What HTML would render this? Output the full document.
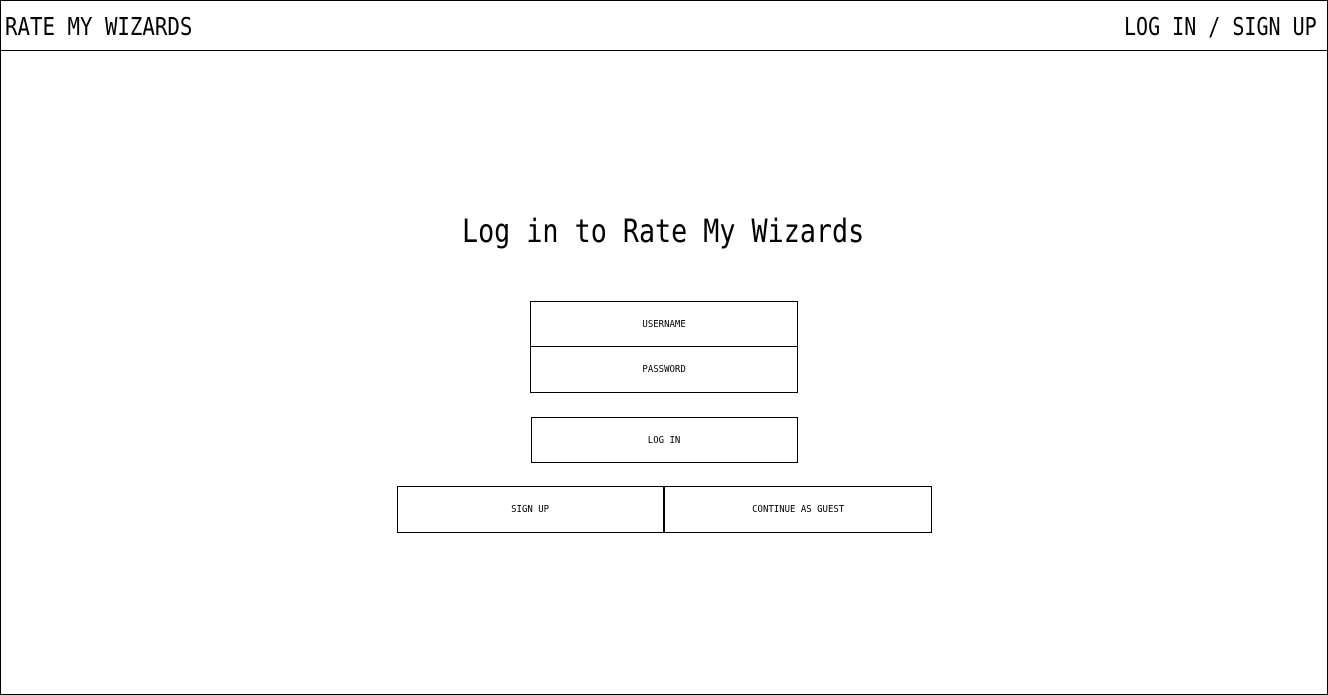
<!DOCTYPE html>
<html><head><style>
*{margin:0;padding:0;box-sizing:border-box}
html,body{width:1328px;height:695px;background:#fff;overflow:hidden}
body{position:relative;font-family:"DejaVu Sans Mono","Liberation Mono",monospace;color:#000}
.frame{position:absolute;left:0;top:0;width:1328px;height:695px;border:1px solid #000}
.hline{position:absolute;left:0;top:50px;width:1328px;height:1px;background:#000}
.t{position:absolute;white-space:nowrap;line-height:1;transform-origin:0 0;transform:scaleX(0.83);font-weight:300}
.box{position:absolute;border:1px solid #000;display:flex;align-items:center;justify-content:center;font-size:10px;background:#fff}
.box span{display:inline-block;transform:scaleX(0.9)}
</style></head><body>
<div class="frame"></div>
<div class="hline"></div>
<div class="t" style="left:5px;top:14px;font-size:25px">RATE MY WIZARDS</div>
<div class="t" style="left:1124px;top:14px;font-size:25px;transform:scaleX(0.8)">LOG IN / SIGN UP</div>
<div class="t" style="left:462px;top:215px;font-size:32px;transform:scaleX(0.835)">Log in to Rate My Wizards</div>
<div class="box" style="left:530px;top:301px;width:268px;height:46px"><span>USERNAME</span></div>
<div class="box" style="left:530px;top:346px;width:268px;height:47px"><span>PASSWORD</span></div>
<div class="box" style="left:531px;top:417px;width:267px;height:46px"><span>LOG IN</span></div>
<div class="box" style="left:397px;top:486px;width:267px;height:47px"><span>SIGN UP</span></div>
<div class="box" style="left:664px;top:486px;width:268px;height:47px"><span>CONTINUE AS GUEST</span></div>
</body></html>
